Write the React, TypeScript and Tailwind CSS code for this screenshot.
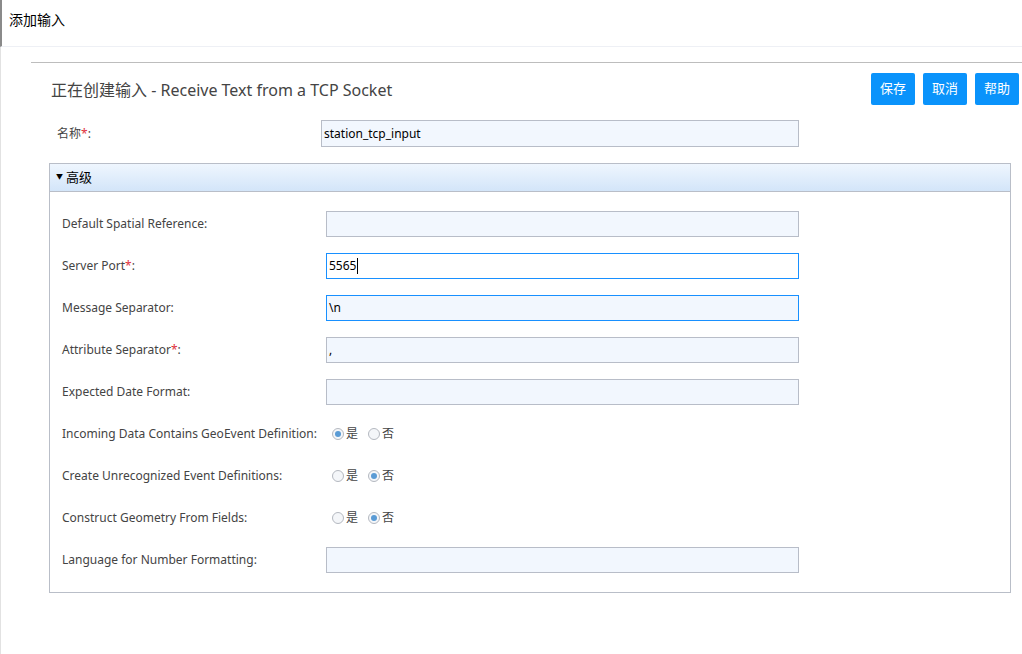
import { useState } from "react";

type Row =
  | { kind: "text"; label: string; required?: boolean; value?: string; focused?: boolean; white?: boolean }
  | { kind: "radio"; label: string; yes: boolean };

const ROWS: Row[] = [
  { kind: "text", label: "Default Spatial Reference:" },
  { kind: "text", label: "Server Port", required: true, value: "5565", focused: true, white: true },
  { kind: "text", label: "Message Separator:", value: "\\n", focused: true },
  { kind: "text", label: "Attribute Separator", required: true, value: "," },
  { kind: "text", label: "Expected Date Format:" },
  { kind: "radio", label: "Incoming Data Contains GeoEvent Definition:", yes: true },
  { kind: "radio", label: "Create Unrecognized Event Definitions:", yes: false },
  { kind: "radio", label: "Construct Geometry From Fields:", yes: false },
  { kind: "text", label: "Language for Number Formatting:" },
];

function Radio({ checked, label }: { checked: boolean; label: string }) {
  return (
    <span className="flex items-center gap-[2px]">
      <span className="flex h-[12px] w-[12px] items-center justify-center rounded-full border border-[#b4b8c0] bg-[#f4f6f9]">
        {checked ? <span className="h-[6px] w-[6px] rounded-full bg-[#5a9bd5]" /> : null}
      </span>
      <span>{label}</span>
    </span>
  );
}

function FieldLabel({ label, required }: { label: string; required?: boolean }) {
  return (
    <span>
      {label}
      {required ? (
        <>
          <span className="text-[#e0303a]">*</span>:
        </>
      ) : null}
    </span>
  );
}

export default function App() {
  const [name, setName] = useState("station_tcp_input");

  return (
    <div
      className="h-[654px] w-[1022px] overflow-hidden bg-white text-[12px] text-[#444]"
      style={{ fontFamily: '"Noto Sans", "Noto Sans CJK SC", sans-serif' }}
    >
      <header className="h-[47px] border-b border-[#eef0f5] border-l-2 border-l-[#8a8a8a] pl-[7px] pt-[10px] text-[14px] leading-[20px] text-black">
        添加输入
      </header>

      <div className="flex h-[607px] border-l border-[#e2e2e2]">
        <div className="ml-[30px] flex-1 pt-[15px]">
          <div className="border-t border-[#bdbdbd]" />

          <div className="flex items-start justify-between pl-[20px] pr-[3px] pt-[10px]">
            <h1 className="mt-[5px] text-[16px] text-[#444]">正在创建输入 - Receive Text from a TCP Socket</h1>
            <div className="flex gap-[8px]">
              {["保存", "取消", "帮助"].map((b) => (
                <button
                  key={b}
                  type="button"
                  className="h-[32px] w-[44px] rounded-[2px] bg-[#0a93fb] text-[13px] text-white"
                >
                  {b}
                </button>
              ))}
            </div>
          </div>

          <div className="mt-[15px] flex items-center pl-[26px]">
            <span className="w-[264px]">
              名称<span className="text-[#e0303a]">*</span>:
            </span>
            <input
              value={name}
              onChange={(e) => setName(e.target.value)}
              className="h-[27px] w-[478px] border border-[#b8bdc8] bg-[#f2f7fe] px-[2px] text-[12px] text-black outline-none"
            />
          </div>

          <section className="mr-[11px] ml-[18px] mt-[16px] h-[430px] border border-[#b9bec8]">
            <div className="flex h-[28px] items-center gap-[3px] border-b border-[#b9bec8] bg-gradient-to-b from-[#eff6fe] to-[#d3e5f9] pl-[6px] text-[13px] text-black">
              <span className="text-[7px]">▼</span>
              <span>高级</span>
            </div>
            <div className="flex flex-col pt-[11px]">
              {ROWS.map((row) => (
                <div key={row.label} className="flex h-[42px] items-center pl-[12px]">
                  <span className="w-[264px] shrink-0 whitespace-nowrap">
                    <FieldLabel label={row.label} required={row.kind === "text" ? row.required : undefined} />
                  </span>
                  {row.kind === "text" ? (
                    <div
                      className={
                        row.focused
                          ? row.white
                            ? "flex h-[26px] w-[473px] items-center border border-[#1890ff] bg-white px-[2px] text-black"
                            : "flex h-[26px] w-[473px] items-center border border-[#1890ff] bg-[#f2f7fe] px-[2px] text-black"
                          : "flex h-[26px] w-[473px] items-center border border-[#b8bdc8] bg-[#f2f7fe] px-[2px] text-black"
                      }
                    >
                      {row.value ?? ""}
                      {row.white ? <span className="ml-[1px] h-[16px] w-px bg-black" /> : null}
                    </div>
                  ) : (
                    <div className="ml-[6px] flex items-center gap-[10px] text-[#444]">
                      <Radio checked={row.yes} label="是" />
                      <Radio checked={!row.yes} label="否" />
                    </div>
                  )}
                </div>
              ))}
            </div>
          </section>
        </div>
      </div>
    </div>
  );
}
